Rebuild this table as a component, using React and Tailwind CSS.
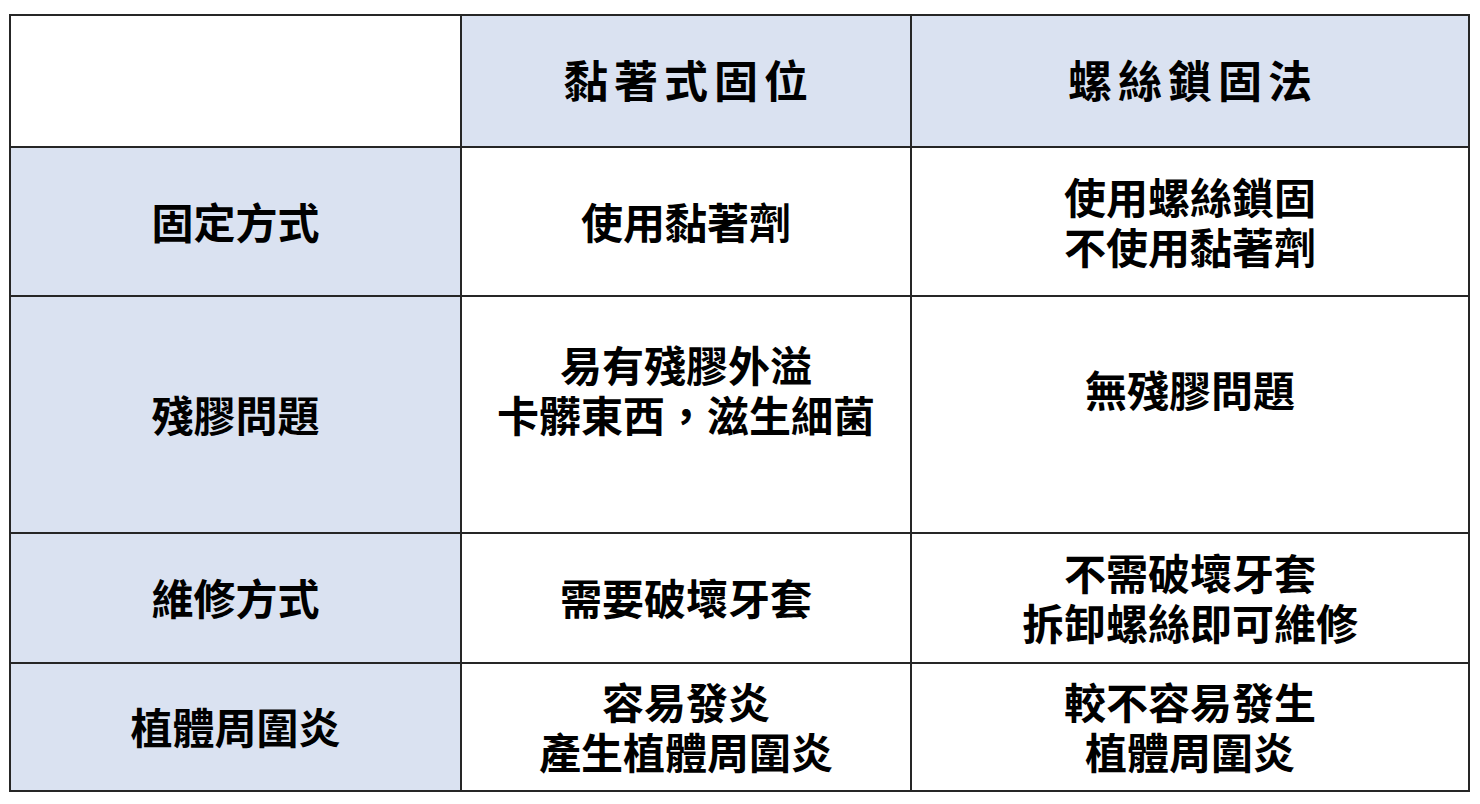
import React from "react";

const font = { fontFamily: '"Noto Sans CJK TC", "Noto Sans CJK SC", sans-serif' };

function Cell({ blue, children, header }) {
  return (
    <div
      className={`flex items-center justify-center text-center border-r-2 border-b-2 border-[#262626] ${
        blue ? "bg-[#dae2f1]" : "bg-white"
      }`}
    >
      <div
        className={
          header
            ? "text-[44px] font-bold leading-[50px] tracking-[6px] pb-[5px] pl-[6px] text-black"
            : "text-[42px] font-bold leading-[50px] pb-[2px] text-black"
        }
      >
        {children}
      </div>
    </div>
  );
}

function Lines({ lines }) {
  return lines.map((l, i) => (
    <div key={i} className="h-[50px] whitespace-nowrap">
      {l}
    </div>
  ));
}

export default function App() {
  return (
    <div className="w-[1480px] h-[804px] bg-white" style={font}>
      <div className="pt-[14px] pl-[9px]">
        <div className="grid grid-cols-[451px_450px_558px] grid-rows-[132px_149px_237px_130px_128px] w-fit border-l-2 border-t-2 border-[#262626]">
          <Cell />
          <Cell blue header>黏著式固位</Cell>
          <Cell blue header>螺絲鎖固法</Cell>

          <Cell blue><Lines lines={["固定方式"]} /></Cell>
          <Cell><Lines lines={["使用黏著劑"]} /></Cell>
          <Cell><Lines lines={["使用螺絲鎖固", "不使用黏著劑"]} /></Cell>

          <Cell blue><Lines lines={["殘膠問題"]} /></Cell>
          <Cell><Lines lines={["易有殘膠外溢", "卡髒東西，滋生細菌", ""]} /></Cell>
          <Cell><Lines lines={["無殘膠問題", ""]} /></Cell>

          <Cell blue><Lines lines={["維修方式"]} /></Cell>
          <Cell><Lines lines={["需要破壞牙套"]} /></Cell>
          <Cell><Lines lines={["不需破壞牙套", "拆卸螺絲即可維修"]} /></Cell>

          <Cell blue><Lines lines={["植體周圍炎"]} /></Cell>
          <Cell><Lines lines={["容易發炎", "產生植體周圍炎"]} /></Cell>
          <Cell><Lines lines={["較不容易發生", "植體周圍炎"]} /></Cell>
        </div>
      </div>
    </div>
  );
}
